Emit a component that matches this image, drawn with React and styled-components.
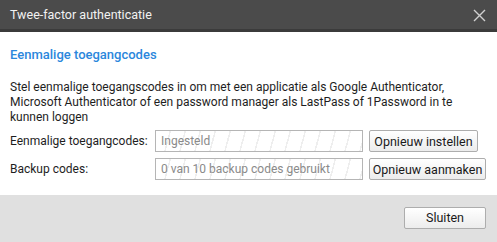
import React from "react";
import styled, { createGlobalStyle } from "styled-components";

const Global = createGlobalStyle`
  html, body { margin: 0; padding: 0; background: #fff; }
  body { font-family: Roboto, "Noto Sans", Arial, sans-serif; }
  * { box-sizing: border-box; }
`;

const Dialog = styled.div`
  width: 497px;
  height: 242px;
  display: flex;
  flex-direction: column;
  background: #fff;
`;

const TitleBar = styled.div`
  height: 32px;
  background: #4b4b4b;
  border-bottom: 3px solid #3b3b3b;
  display: flex;
  align-items: center;
  justify-content: space-between;
  padding: 0 11px 0 10px;
  flex-shrink: 0;
`;

const Title = styled.div`
  color: #f2f2f2;
  font-size: 12.5px;
  line-height: 16px;
  margin-top: 1px;
`;

const Close = styled.button`
  border: 0;
  background: none;
  padding: 0;
  width: 13px;
  height: 13px;
  display: flex;
  cursor: pointer;
  margin-top: 2px;
`;

const Body = styled.div`
  flex: 1;
  padding: 15px 10px 0 10px;
  display: flex;
  flex-direction: column;
`;

const Heading = styled.div`
  color: #2b87dc;
  font-size: 13px;
  font-weight: 500;
  line-height: 16px;
`;

const Text = styled.p`
  margin: 17px 0 0 0;
  color: #1e1e1e;
  font-size: 12px;
  line-height: 15px;
`;

const Rows = styled.div`
  margin-top: 5px;
  display: flex;
  flex-direction: column;
  gap: 6px;
`;

const Row = styled.div`
  display: flex;
  align-items: center;
  height: 22px;
`;

const Label = styled.div`
  width: 145px;
  color: #1e1e1e;
  font-size: 12px;
`;

const Field = styled.div`
  width: 208px;
  height: 22px;
  border: 1px solid #b5b5b5;
  background-color: #fff;
  background-image: repeating-linear-gradient(
    105deg,
    transparent 0px,
    transparent 13px,
    #eeeeee 13px,
    #eeeeee 14.5px
  );
  color: #8a8a8a;
  font-size: 12px;
  padding: 0 5px;
  display: flex;
  align-items: center;
`;

const Button = styled.button`
  margin-left: 6px;
  height: 22px;
  width: ${(p) => p.$w}px;
  border: 1px solid #adadad;
  border-radius: 2px;
  background: linear-gradient(#ffffff, #ececec);
  color: #1a1a1a;
  font-family: Roboto, "Noto Sans", Arial, sans-serif;
  font-size: 12.5px;
  padding: 0;
  cursor: pointer;
`;

const Footer = styled.div`
  height: 47px;
  background: #e0e0e0;
  display: flex;
  align-items: center;
  justify-content: flex-end;
  padding: 0 11px 2px 0;
  flex-shrink: 0;
`;

export default function App() {
  return (
    <>
      <Global />
      <Dialog>
        <TitleBar>
          <Title>Twee-factor authenticatie</Title>
          <Close aria-label="Sluiten">
            <svg width="13" height="13" viewBox="0 0 13 13">
              <path d="M1 1 L12 12 M12 1 L1 12" stroke="#d0d0d0" strokeWidth="1.4" />
            </svg>
          </Close>
        </TitleBar>
        <Body>
          <Heading>Eenmalige toegangcodes</Heading>
          <Text>
            Stel eenmalige toegangscodes in om met een applicatie als Google Authenticator,
            Microsoft Authenticator of een password manager als LastPass of 1Password in te
            kunnen loggen
          </Text>
          <Rows>
            <Row>
              <Label>Eenmalige toegangcodes:</Label>
              <Field>Ingesteld</Field>
              <Button $w={109}>Opnieuw instellen</Button>
            </Row>
            <Row>
              <Label>Backup codes:</Label>
              <Field>0 van 10 backup codes gebruikt</Field>
              <Button $w={117}>Opnieuw aanmaken</Button>
            </Row>
          </Rows>
        </Body>
        <Footer>
          <Button $w={82}>Sluiten</Button>
        </Footer>
      </Dialog>
    </>
  );
}
